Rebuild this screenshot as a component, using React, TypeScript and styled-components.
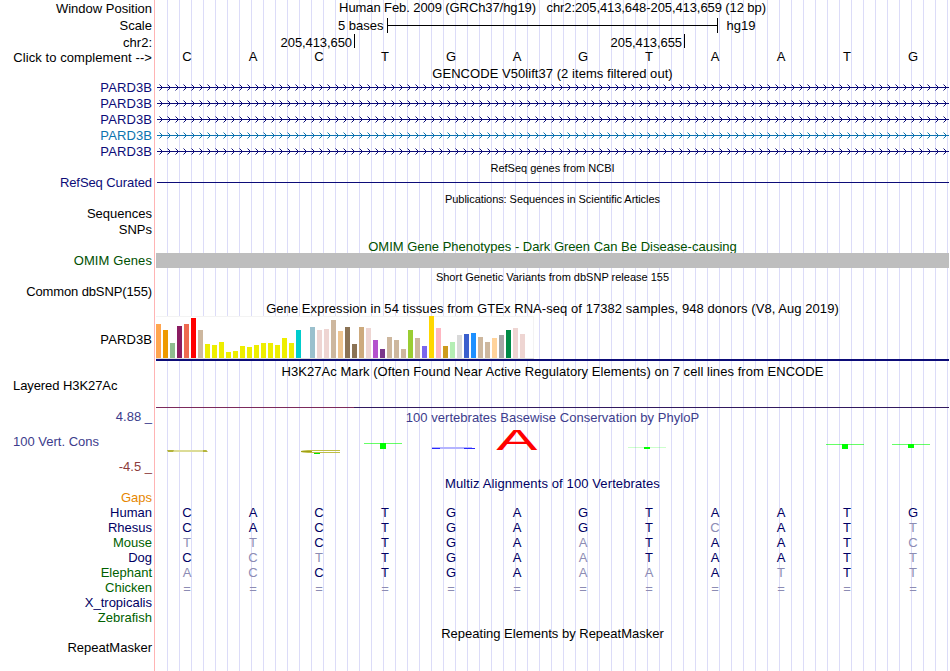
import React from 'react';
import styled, { createGlobalStyle } from 'styled-components';

const NAVY = '#0c0c78';
const BLUE = '#000064';
const GREEN = '#005f00';

const GlobalStyle = createGlobalStyle`
  body {
    margin: 0;
    background: white;
  }
`;

const Browser = styled.main`
  width: 950px;
  height: 671px;
  overflow: hidden;
  box-sizing: border-box;
  color: black;
  font: 13px/15px "Liberation Sans", Arial, sans-serif;
  background:
    linear-gradient(#ffb4b4, #ffb4b4) 154px 0 / 1px 100% no-repeat,
    repeating-linear-gradient(to right, #dcdcf8 0 1px, transparent 1px 12px) 167px 0 / 783px 100% no-repeat;
`;

const Row = styled.div<{ $h: number }>`
  display: grid;
  grid-template-columns: 152px 793px;
  column-gap: 4px;
  height: ${p => p.$h}px;
`;

const Label = styled.div<{ $color?: string, $left?: boolean, $lift?: number, $track?: number }>`
  display: flex;
  align-items: center;
  justify-content: ${p => p.$left ? 'flex-start' : 'flex-end'};
  padding-left: ${p => p.$left ? 13 : 0}px;
  margin: ${p => -(p.$lift || 0)}px 0 ${p => p.$lift || 0}px;
  box-sizing: border-box;
  color: ${p => p.$color || 'inherit'};
  letter-spacing: ${p => p.$track || 0}px;
  white-space: pre;
`;

const Title = styled.div<{ $color?: string, $small?: boolean, $track?: number, $lift?: number }>`
  display: flex;
  align-items: center;
  justify-content: center;
  margin: ${p => -(p.$lift || 0)}px 0 ${p => p.$lift || 0}px;
  color: ${p => p.$color || 'inherit'};
  font-size: ${p => p.$small ? 11 : 13}px;
  letter-spacing: ${p => p.$track || 0}px;
  white-space: pre;
`;

const BaseRow = styled.div<{ $lift?: number }>`
  display: grid;
  grid-template-columns: repeat(12, 66px);
  align-items: center;
  text-align: center;
  margin: ${p => -(p.$lift || 0)}px 2px ${p => p.$lift || 0}px -2px;
`;

const Base = styled.span<{ $faded?: boolean, $color?: string }>`
  color: ${p => p.$faded ? '#8c8cb4' : p.$color || 'inherit'};
`;

const ScaleTrack = styled.div`
  display: flex;
  align-items: center;
  padding-left: 182px;
  gap: 3px;
`;

const ScaleBar = styled.div`
  width: 329px;
  height: 15px;
  border: solid black;
  border-width: 0 1px;
  margin-right: 6px;
  background: linear-gradient(black, black) 0 7px / 100% 1px no-repeat;
`;

const Ruler = styled.div`
  display: flex;
`;

const Tick = styled.div<{ $w: number }>`
  width: ${p => p.$w}px;
  height: 14px;
  box-sizing: border-box;
  border-right: 1px solid black;
  padding-right: 2px;
  line-height: 17px;
  letter-spacing: -0.08px;
  text-align: right;
`;

const Drawing = styled.svg`
  display: block;
  overflow: visible;
`;

const Rule = styled.div<{ $top: number, $inset?: number }>`
  height: 1px;
  margin: ${p => p.$top}px 0 0 ${p => p.$inset || 0}px;
  background: ${NAVY};
`;

const GreyBar = styled.div`
  height: 15px;
  background: #bebebe;
`;

const Expression = styled.div`
  height: 45px;
  box-sizing: border-box;
  border-bottom: 2px solid ${NAVY};
`;

const Bars = styled.div`
  display: flex;
  align-items: flex-end;
  gap: 2px;
  width: 378px;
  height: 43px;
  box-sizing: border-box;
  border-bottom: 1px solid #dcdcdc;
  background: linear-gradient(#f3f3f3, #f3f3f3) 0 0 / 100% 1px no-repeat, white;
  box-shadow: inset -1px 0 #f3f3f3;
`;

const Bar = styled.div<{ $h: number, $color: string }>`
  flex: 0 0 5px;
  height: ${p => p.$h}px;
  background: ${p => p.$color};
`;

const SignalLine = styled.div`
  height: 1px;
  margin-top: 29px;
  background: linear-gradient(to right, #7c2a5c 0 198px, #32195f 198px);
`;

const ConsLabels = styled.div`
  display: flex;
  flex-direction: column;
  justify-content: space-between;
  padding: 9px 0 1px 13px;
  color: #3c3c8c;
`;

const LowerLimit = styled.span`
  color: #8c3c3c;
  text-align: right;
`;

const tissues: [number, string][] = [
  [34, '#ffa54f'], [28, '#ee9a00'], [15, '#8fbc8f'], [32, '#8b1c62'], [34, '#ee6a50'], [40, '#ff0000'],
  [28, '#cdb79e'], [14, '#eeee00'], [13, '#eeee00'], [16, '#eeee00'], [6, '#eeee00'], [7, '#eeee00'],
  [12, '#eeee00'], [11, '#eeee00'], [13, '#eeee00'], [15, '#eeee00'], [15, '#eeee00'], [13, '#eeee00'],
  [20, '#eeee00'], [15, '#eeee00'], [28, '#00cdcd'], [0, '#ee82ee'], [31, '#9ac0cd'], [28, '#eed5d2'],
  [29, '#eed5d2'], [38, '#cdb79e'], [27, '#eec591'], [31, '#8b7355'], [14, '#8b7355'], [31, '#cdaa7d'],
  [30, '#eed5d2'], [18, '#b452cd'], [9, '#7a378b'], [21, '#cdb79e'], [18, '#cdb79e'], [9, '#cdb79e'],
  [28, '#9acd32'], [20, '#cdb79e'], [12, '#7a67ee'], [42, '#ffd700'], [30, '#ffb6c1'], [12, '#cd9b1d'],
  [16, '#b4eeb4'], [23, '#d9d9d9'], [24, '#3a5fcd'], [25, '#1e90ff'], [21, '#cdb79e'], [16, '#cdb79e'],
  [20, '#ffd39b'], [23, '#a6a6a6'], [28, '#008b45'], [30, '#eed5d2'], [24, '#eed5d2'], [0, '#ff00ff'],
];

// lower case letters are mismatches and get the faded colour
const species: [string, string, string][] = [
  ['Human', BLUE, 'CACTGAGTAATG'],
  ['Rhesus', BLUE, 'CACTGAGTcATt'],
  ['Mouse', GREEN, 'ttCTGAaTAATc'],
  ['Dog', BLUE, 'CctTGAaTAATt'],
  ['Elephant', GREEN, 'acCTGAaaAtTt'],
  ['Chicken', GREEN, '============'],
  ['X_tropicalis', BLUE, ''],
  ['Zebrafish', GREEN, ''],
];

const Bases = ({ seq, color, lift }: { seq: string, color?: string, lift?: number }) => (
  <BaseRow $lift={lift}>
    {seq.split('').map((b, i) => (
      <Base key={i} $color={color} $faded={b === '=' || b !== b.toUpperCase()}>{b.toUpperCase()}</Base>
    ))}
  </BaseRow>
);

const TitleRow = ({ h, children, ...rest }: {
  h: number,
  children: React.ReactNode,
  $color?: string,
  $small?: boolean,
  $track?: number,
  $lift?: number
}) => (
  <Row $h={h}>
    <span />
    <Title {...rest}>{children}</Title>
  </Row>
);

const Intron = ({ color }: { color: string }) => (
  <Drawing width="793" height="16" stroke={color} fill="none">
    <path d="M1 7.5H793" />
    {Array.from({ length: 99 }, (_, i) => (
      <path key={i} d={`M${3.5 + i * 8} 4.5l3 3l-3 3`} />
    ))}
  </Drawing>
);

const TLogo = ({ x, y, h, opacity }: { x: number, y: number, h: number, opacity: number }) => (
  <g fill="#00ff00">
    <rect x={x} y={y} width="38" height="1" opacity={opacity} />
    <rect x={x + 16} y={y} width="6" height={h} />
  </g>
);

const Conservation = () => (
  <Drawing width="793" height="50">
    <rect x="12" y="25" width="39" height="2" fill="#dcdc96" />
    <path d="M11 25h7l-1 2h-5zM47 25h3l2 2h-5z" fill="#b4b43c" />
    <path d="M184 25.5h-32q-14 1 0 2h32" fill="none" stroke="#bebe46" />
    <path d="M145 26.5h11" stroke="#a0a014" />
    <rect x="158" y="28" width="6" height="1" fill="#00e600" />
    <TLogo x={208} y={18} h={6} opacity={0.6} />
    <rect x="276" y="22" width="40" height="2" fill="#b4b4ff" />
    <path d="M276 23.5h8M308 23.5h11" stroke="#2828ff" />
    <text transform="translate(340.3 25) scale(2.13 1)" fontSize="29" fill="red">A</text>
    <TLogo x={472} y={22} h={2} opacity={0.2} />
    <TLogo x={670} y={19} h={5} opacity={0.6} />
    <TLogo x={736} y={19} h={4} opacity={0.6} />
  </Drawing>
);

const App = () => (
  <>
    <GlobalStyle />
    <Browser>
      <Row $h={17}>
        <Label>Window Position</Label>
        <Title $lift={1} $track={-0.09}>Human Feb. 2009 (GRCh37/hg19)   chr2:205,413,648-205,413,659 (12 bp)</Title>
      </Row>
      <Row $h={17}>
        <Label>Scale</Label>
        <ScaleTrack>5 bases<ScaleBar />hg19</ScaleTrack>
      </Row>
      <Row $h={16}>
        <Label>chr2:</Label>
        <Ruler>
          <Tick $w={199}>205,413,650</Tick>
          <Tick $w={330}>205,413,655</Tick>
        </Ruler>
      </Row>
      <Row $h={15}>
        <Label $track={0.08}>Click to complement --&gt;</Label>
        <Bases seq="CACTGAGTAATG" lift={1} />
      </Row>
      <TitleRow h={15} $lift={-1} $track={0.05}>GENCODE V50lift37 (2 items filtered out)</TitleRow>
      {[NAVY, NAVY, NAVY, '#0c73af', NAVY].map((color, i) => (
        <Row $h={16} key={i}>
          <Label $color={color} $lift={1} $track={0.1}>PARD3B</Label>
          <Intron color={color} />
        </Row>
      ))}
      <TitleRow h={16} $small>RefSeq genes from NCBI</TitleRow>
      <Row $h={15}>
        <Label $color={NAVY} $lift={1} $track={-0.08}>RefSeq Curated</Label>
        <Rule $top={6} $inset={1} />
      </Row>
      <TitleRow h={15} $small $lift={-1} $track={-0.06}>Publications: Sequences in Scientific Articles</TitleRow>
      <Row $h={15}><Label>Sequences</Label></Row>
      <Row $h={16}><Label>SNPs</Label></Row>
      <TitleRow h={16} $color="#005000" $lift={-1}>OMIM Gene Phenotypes - Dark Green Can Be Disease-causing</TitleRow>
      <Row $h={15}>
        <Label $color="#005000" $track={0.1}>OMIM Genes</Label>
        <GreyBar />
      </Row>
      <TitleRow h={16} $small $lift={-1}>Short Genetic Variants from dbSNP release 155</TitleRow>
      <Row $h={15}><Label $track={-0.12}>Common dbSNP(155)</Label></Row>
      <TitleRow h={17} $lift={-1} $track={0.06}>Gene Expression in 54 tissues from GTEx RNA-seq of 17382 samples, 948 donors (V8, Aug 2019)</TitleRow>
      <Row $h={45}>
        <Label $lift={-1} $track={0.1}>PARD3B</Label>
        <Expression>
          <Bars>{tissues.map(([h, color], i) => <Bar key={i} $h={h} $color={color} />)}</Bars>
        </Expression>
      </Row>
      <TitleRow h={17} $lift={-2} $track={0.05}>H3K27Ac Mark (Often Found Near Active Regulatory Elements) on 7 cell lines from ENCODE</TitleRow>
      <Row $h={30}>
        <Label $left $lift={8} $track={-0.08}>Layered H3K27Ac</Label>
        <SignalLine />
      </Row>
      <Row $h={17}>
        <Label $color="#3c3c8c">4.88 _</Label>
        <Title $color="#3c3c8c" $lift={-1} $track={0.03}>100 vertebrates Basewise Conservation by PhyloP</Title>
      </Row>
      <Row $h={50}>
        <ConsLabels>
          <span>100 Vert. Cons</span>
          <LowerLimit>-4.5 _</LowerLimit>
        </ConsLabels>
        <Conservation />
      </Row>
      <TitleRow h={15} $color={BLUE} $lift={-1} $track={0.11}>Multiz Alignments of 100 Vertebrates</TitleRow>
      <Row $h={15}><Label $color="#e68600">Gaps</Label></Row>
      {species.map(([name, color, seq]) => (
        <Row $h={15} key={name}>
          <Label $color={color}>{name}</Label>
          <Bases seq={seq} color={BLUE} lift={seq[0] === '=' ? -1 : 0} />
        </Row>
      ))}
      <TitleRow h={15} $lift={-1}>Repeating Elements by RepeatMasker</TitleRow>
      <Row $h={15}><Label>RepeatMasker</Label></Row>
    </Browser>
  </>
);

export default App;
